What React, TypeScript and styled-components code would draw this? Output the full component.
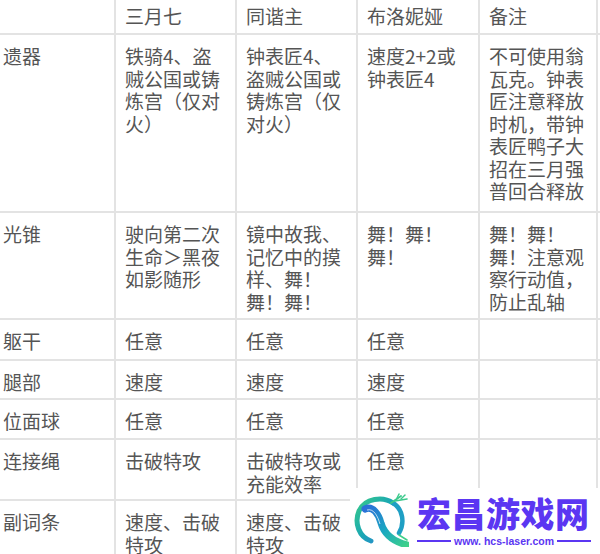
import styled, { createGlobalStyle } from 'styled-components';

const GlobalStyle = createGlobalStyle`
  html, body {
    margin: 0;
    padding: 0;
    background: #ffffff;
    overflow: hidden;
  }
`;

type Cell = string[];

const header: Cell[] = [[''], ['三月七'], ['同谐主'], ['布洛妮娅'], ['备注'], ['']];

const rows: Cell[][] = [
  [
    ['遗器'],
    ['铁骑4、盗', '贼公国或铸', '炼宫（仅对', '火）'],
    ['钟表匠4、', '盗贼公国或', '铸炼宫（仅', '对火）'],
    ['速度2+2或', '钟表匠4'],
    ['不可使用翁', '瓦克。钟表', '匠注意释放', '时机，带钟', '表匠鸭子大', '招在三月强', '普回合释放'],
    [''],
  ],
  [
    ['光锥'],
    ['驶向第二次', '生命＞黑夜', '如影随形'],
    ['镜中故我、', '记忆中的摸', '样、舞！', '舞！舞！'],
    ['舞！舞！', '舞！'],
    ['舞！舞！', '舞！注意观', '察行动值，', '防止乱轴'],
    [''],
  ],
  [['躯干'], ['任意'], ['任意'], ['任意'], [''], ['']],
  [['腿部'], ['速度'], ['速度'], ['速度'], [''], ['']],
  [['位面球'], ['任意'], ['任意'], ['任意'], [''], ['']],
  [['连接绳'], ['击破特攻'], ['击破特攻或', '充能效率'], ['任意'], [''], ['']],
  [['副词条'], ['速度、击破', '特攻'], ['速度、击破', '特攻'], [''], [''], ['']],
];

const App = () => {
  return (
    <>
      <GlobalStyle />
      <Page>
        <Table>
          {header.map((cell, i) => (
            <HeadCell key={`h${i}`} $first={i === 0}>
              {cell.map((line, j) => (
                <Line key={j}>{line}</Line>
              ))}
            </HeadCell>
          ))}
          {rows.map((row, r) =>
            row.map((cell, i) => (
              <BodyCell key={`${r}-${i}`} $first={i === 0}>
                {cell.map((line, j) => (
                  <Line key={j}>{line}</Line>
                ))}
              </BodyCell>
            ))
          )}
        </Table>

        <Watermark>
          <LogoMark viewBox="0 0 56 54" width="56" height="54">
            <defs>
              <linearGradient id="ring" x1="0" y1="0" x2="1" y2="1">
                <stop offset="0" stopColor="#37c98a" />
                <stop offset="0.5" stopColor="#1aa7b4" />
                <stop offset="1" stopColor="#2f7fd6" />
              </linearGradient>
              <linearGradient id="swoosh" x1="0" y1="0" x2="1" y2="1">
                <stop offset="0" stopColor="#2b6fd8" />
                <stop offset="0.55" stopColor="#19a9c0" />
                <stop offset="1" stopColor="#3fd08a" />
              </linearGradient>
            </defs>
            <path
              d="M40 10 C30 3 12 5 6 18 C1 30 6 44 18 48"
              fill="none"
              stroke="url(#ring)"
              strokeWidth="5"
              strokeLinecap="round"
            />
            <path
              d="M40 10 C50 16 52 30 46 40"
              fill="none"
              stroke="#1f9fc4"
              strokeWidth="4.5"
              strokeLinecap="round"
            />
            <path
              d="M12 16 C20 12 26 22 28 30 C31 40 38 48 54 52"
              fill="none"
              stroke="url(#swoosh)"
              strokeWidth="7"
              strokeLinecap="round"
            />
            <path d="M14 17 C21 15 25 24 27 31" fill="none" stroke="#ffffff" strokeWidth="1" opacity="0.7" />
            <path d="M38 10 L48 3" stroke="#3cc98c" strokeWidth="2" strokeLinecap="round" />
            <path d="M42 8 L54 6" stroke="#3cc98c" strokeWidth="1.6" strokeLinecap="round" />
            <path d="M44 5 L46 1" stroke="#3cc98c" strokeWidth="1.4" strokeLinecap="round" />
            <path d="M48 6 L52 2" stroke="#3cc98c" strokeWidth="1.4" strokeLinecap="round" />
            <path d="M46 42 L54 47" stroke="#3fd08a" strokeWidth="1.6" strokeLinecap="round" />
          </LogoMark>
          <BrandBox>
            <BrandName>宏昌游戏网</BrandName>
            <BrandSub>
              <Rule />
              <SiteText>www. hcs-laser.com</SiteText>
              <Rule />
            </BrandSub>
          </BrandBox>
        </Watermark>
      </Page>
    </>
  );
};

const Page = styled.div`
  position: relative;
  width: 600px;
  height: 554px;
  overflow: hidden;
  background: #ffffff;
`;

const Table = styled.div`
  display: grid;
  grid-template-columns: 114px 119px 119px 120px 116px 1fr;
  grid-template-rows: 33px 176px 105px 39px 37px 38px 59px 60px;
  gap: 2px;
  background: #e3e3e3;
  width: 600px;
  font-family: 'Noto Sans CJK SC', 'Noto Sans', sans-serif;
  font-size: 19px;
  line-height: 22.5px;
  color: #555555;
`;

const BaseCell = styled.div<{ $first?: boolean }>`
  background: #ffffff;
  padding-left: ${({ $first }) => ($first ? '3px' : '9px')};
  overflow: hidden;
`;

const HeadCell = styled(BaseCell)`
  padding-top: 5px;
`;

const BodyCell = styled(BaseCell)`
  padding-top: 10px;
`;

const Line = styled.div`
  white-space: nowrap;
  min-height: 22.5px;
`;

const Watermark = styled.div`
  position: absolute;
  left: 350px;
  top: 488px;
  width: 250px;
  height: 66px;
  background: #ffffff;
  display: flex;
  align-items: flex-start;
  padding: 5px 0 0 3px;
  box-sizing: border-box;
`;

const LogoMark = styled.svg`
  flex-shrink: 0;
`;

const BrandBox = styled.div`
  display: flex;
  flex-direction: column;
  margin-left: 8px;
  width: 174px;
`;

const BrandName = styled.div`
  font-family: 'Noto Sans CJK SC', sans-serif;
  font-weight: 900;
  font-size: 34px;
  line-height: 40px;
  letter-spacing: 0.5px;
  color: #5b36f2;
  white-space: nowrap;
`;

const BrandSub = styled.div`
  display: flex;
  align-items: center;
  gap: 3px;
  margin-top: 2px;
`;

const Rule = styled.div`
  flex: 1;
  height: 1.5px;
  background: #5b36f2;
`;

const SiteText = styled.span`
  font-family: 'Liberation Sans', Arial, sans-serif;
  font-weight: 700;
  font-size: 10.5px;
  line-height: 12px;
  color: #5b36f2;
  white-space: nowrap;
`;

export default App;
